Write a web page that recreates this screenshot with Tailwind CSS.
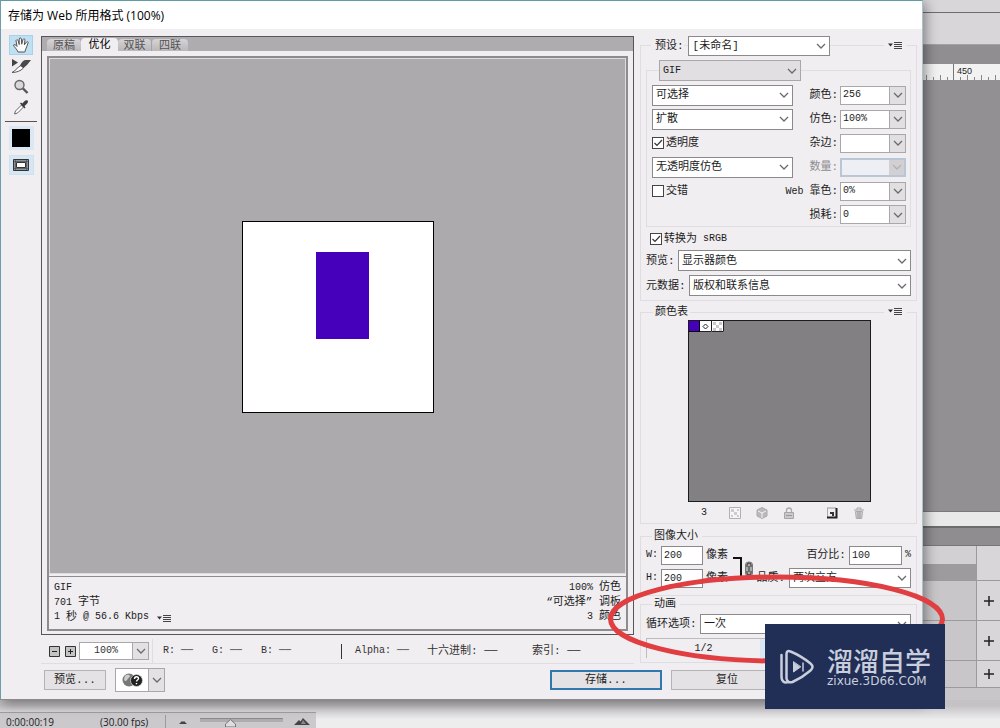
<!DOCTYPE html>
<html lang="zh-CN">
<head>
<meta charset="utf-8">
<meta name="viewport" content="width=device-width, initial-scale=1">
<title>存储为 Web 所用格式</title>
<script src="https://cdn.jsdelivr.net/npm/@tailwindcss/browser@4"></script>
</head>
<body class="relative flex min-h-screen flex-col overflow-x-hidden bg-[#e9e8e9] font-['Liberation_Mono','Noto_Sans_CJK_SC',monospace] text-[11px] leading-4 text-[#1c1c1c]">
<svg class="hidden" aria-hidden="true">
  <symbol id="chev" viewBox="0 0 10 6"><path d="M1 1l4 4 4-4" fill="none" stroke="#6b6b6b" stroke-width="1.3"/></symbol>
  <symbol id="menu" viewBox="0 0 15 8"><path d="M0 1.500h5L2.500 4.500z" fill="#333"/><path d="M6 .5h8M6 2.500h8M6 4.500h8M6 6.500h8" stroke="#444" stroke-width="1"/></symbol>
</svg>

<div class="flex grow">
  <!-- dialog -->
  <main class="relative z-10 flex min-w-0 grow flex-col border border-t-[#5f9ba5] border-r-[#a8c4c8] border-b-[#8c8a8c] border-l-[#6f9dac] bg-[#f0eef1] shadow-[2px_3px_12px_rgba(0,0,0,0.45)]">
    <h1 class="flex h-7 items-center bg-white pl-[7px] pt-px font-['Open_Sans','Noto_Sans_CJK_SC',sans-serif] text-[12px] text-black">存储为 Web 所用格式 (100%)</h1>

    <div class="flex grow">
      <!-- tools -->
      <nav class="flex w-10 shrink-0 flex-col items-center pt-[6px]" aria-label="工具">
        <button aria-label="抓手工具" class="flex h-5 w-6 items-center justify-center border border-[#a9d0ea] bg-[#bfdff3]">
          <svg class="h-[18px] w-[18px]" viewBox="0 0 18 18"><path d="M6 16C5 13 2 11 1.500 9c.8-1 2.200-.3 3.500 1.500L4 4.500c.8-1.300 2-.7 2.300.5l.9 3.500V3c.4-1.500 1.900-1.400 2.200 0l.3 5.200L11 3.500c.6-1.200 2-.8 1.900.6l-.5 4.700L14.500 6c.9-.9 2-.2 1.600 1l-2.300 6-1 3z" fill="#fafafa" stroke="#555" stroke-width="1"/></svg>
        </button>
        <button aria-label="切片选择工具" class="flex h-[21px] w-6 items-center justify-center">
          <svg class="h-[14px] w-5" viewBox="0 0 20 14"><path d="M1 0l6 3.500-6 4z" fill="#444"/><path d="M1 13.500C5 12 6 8 10 6.500l2.500 2.500c-3 3-7 4.500-11.500 4.500z" fill="#fff" stroke="#555"/><path d="M9 6.500C10.500 3 12.500 1 15 1h5c-1.500 1.500-2 3-4 5l-3.500 3z" fill="#4a4a4a"/></svg>
        </button>
        <button aria-label="缩放工具" class="flex h-[21px] w-6 items-center justify-center">
          <svg class="h-4 w-4" viewBox="0 0 16 16"><circle cx="6.500" cy="6" r="4.500" fill="#d8d8d8" stroke="#666" stroke-width="1.400"/><path d="M10 9.500l4.500 4.500" stroke="#555" stroke-width="2.400"/></svg>
        </button>
        <button aria-label="吸管工具" class="flex h-5 w-6 items-center justify-center">
          <svg class="h-4 w-4" viewBox="0 0 16 16"><path d="M1.500 15l1-3 6-6 2 2-6 6z" fill="#fff" stroke="#666"/><path d="M7 4.500l1-1 1.500 1C11 2 13 .5 14.500 1.500S14 5 11.500 7l1 1.500-1 1z" fill="#3c3c3c"/></svg>
        </button>
        <hr class="mt-1 w-8 border-t border-[#555]">
        <button aria-label="吸管颜色" class="mt-1 flex h-6 w-[25px] items-center justify-center bg-[#dbe7f3]"><span class="h-[18px] w-[18px] bg-black"></span></button>
        <button aria-label="切换切片可见性" class="mt-[5px] flex h-5 w-[25px] items-center justify-center border border-[#cfe0ef] bg-[#d5e6f5]">
          <svg class="h-3 w-4" viewBox="0 0 16 12"><path d="M.5.5h15v11H.5z" fill="#8b949b" stroke="#333"/><path d="M3.500 3.500h9v5h-9z" fill="#fff" stroke="#333"/><path d="M1 2.500h14M1 9.500h14M2.500 1v10M13.500 1v10" stroke="#444" stroke-width=".6"/></svg>
        </button>
      </nav>

      <!-- preview -->
      <section class="flex min-w-0 grow flex-col pt-[7px]">
        <div class="flex grow flex-col border border-[#57555a]">
          <div class="flex h-[14px] items-end bg-[#aeacaf] pl-[5px] text-[#555]" role="tablist">
            <button role="tab" class="h-3 w-[34px] rounded-t-sm bg-linear-to-b from-[#d6d4d6] to-[#b9b7ba] leading-[14px]">原稿</button>
            <button role="tab" aria-selected="true" class="h-[13px] w-[37px] rounded-t-sm bg-[#f0eef1] leading-[15px] text-black">优化</button>
            <button role="tab" class="h-3 w-[34px] rounded-t-sm border-r border-[#a5a3a6] bg-linear-to-b from-[#d6d4d6] to-[#b9b7ba] leading-[14px]">双联</button>
            <button role="tab" class="h-3 w-9 rounded-t-sm bg-linear-to-b from-[#d6d4d6] to-[#b9b7ba] leading-[14px]">四联</button>
          </div>
          <div class="mx-[5px] mt-[5px] mb-[3px] flex grow flex-col border-2 border-[#8e8c90]">
            <div class="flex grow items-center justify-center border border-[#dddbde] bg-[#acaaac] pt-[2px]">
              <div class="flex h-48 w-48 justify-center border border-black bg-white pt-[30px] pl-[10px]"><div class="h-[87px] w-[53px] bg-[#4600bb]"></div></div>
            </div>
            <div class="mt-[2px] flex h-[53px] items-center justify-between border-t border-[#8e8c90] px-[5px] pb-[2px] text-[10px] leading-[14px]">
              <div>
                <p>GIF</p>
                <p>701 <span class="text-[11px]">字节</span></p>
                <p class="flex items-center">1&nbsp;<span class="text-[11px]">秒</span>&nbsp;@ 56.6 Kbps<button aria-label="优化菜单" class="ml-2"><svg class="mt-1 h-2 w-[15px]"><use href="#menu"/></svg></button></p>
              </div>
              <div class="text-right">
                <p>100% <span class="text-[11px]">仿色</span></p>
                <p class="text-[11px]">“可选择” 调板</p>
                <p>3 <span class="text-[11px]">颜色</span></p>
              </div>
            </div>
          </div>
        </div>
        <div class="mt-1 flex h-[25px] items-center border-b border-[#dfdde0] pl-2 text-[#333]">
          <button aria-label="缩小"><svg class="h-[11px] w-[11px]" viewBox="0 0 11 11"><path d="M.5.5h10v10H.5z" fill="#c4c4c4" stroke="#333"/><path d="M3 5.500h5" stroke="#222"/></svg></button>
          <button aria-label="放大" class="ml-[5px]"><svg class="h-[11px] w-[11px]" viewBox="0 0 11 11"><path d="M.5.5h10v10H.5z" fill="#c4c4c4" stroke="#333"/><path d="M3 5.500h5M5.500 3v5" stroke="#222"/></svg></button>
          <div class="ml-[3px] flex h-[18px] w-[70px] border border-[#a9a7aa] bg-white"><input aria-label="缩放级别" value="100%" class="w-0 grow text-center text-[10px]"><button aria-label="选择缩放级别" class="flex w-4 items-center justify-center border-l border-[#a9a7aa] bg-[#e3e1e4]"><svg class="h-[6px] w-[10px]"><use href="#chev"/></svg></button></div>
          <div class="ml-[3px] flex h-full w-[189px] items-center border-l border-[#dfdde0] pl-[10px] text-[10px]"><span class="w-[49px]">R: ──</span><span class="w-[49px]">G: ──</span><span>B: ──</span></div>
          <div class="h-[15px] w-px bg-[#333]"></div>
          <div class="flex grow items-center pl-[13px]"><span class="w-[72px] text-[10px]">Alpha: ──</span><span class="w-[105px]">十六进制: ──</span><span>索引: ──</span></div>
        </div>
      </section>

      <!-- settings -->
      <section class="mr-[5px] ml-[6px] w-[277px] shrink-0 pt-4">
        <div class="border border-[#dfdde0] pb-1">
          <div class="-mt-[10px] flex h-5 items-center pl-[10px]">
            <label for="preset" class="bg-[#f0eef1] pl-1">预设:</label>
            <span class="relative ml-1 flex h-5 w-[142px] items-center"><select id="preset" class="h-full w-full appearance-none border border-[#8b898c] bg-white pl-1 leading-4"><option>[未命名]</option></select><svg class="pointer-events-none absolute right-1 h-[6px] w-[10px]"><use href="#chev"/></svg></span>
            <button aria-label="预设菜单" class="mr-[9px] ml-auto bg-[#f0eef1] px-1"><svg class="h-2 w-[15px]"><use href="#menu"/></svg></button>
          </div>
          <div class="mx-[5px] mt-[14px] border border-[#dfdde0] pr-1 pl-[5px]">
            <div class="relative -mt-[11px] ml-[7px] flex h-[21px] w-[142px] items-center"><select aria-label="文件格式" class="h-full w-full appearance-none border border-[#a9a7aa] bg-[#e1dfe2] pl-[3px] text-[10px]"><option>GIF</option></select><svg class="pointer-events-none absolute right-1 h-[6px] w-[10px]"><use href="#chev"/></svg></div>
            <div class="flex pt-[2px]">
              <div class="w-[141px] shrink-0">
                <div class="relative flex h-6 items-center"><select aria-label="减低颜色深度算法" class="h-[21px] w-full appearance-none border border-[#8b898c] bg-white pl-[3px]"><option>可选择</option></select><svg class="pointer-events-none absolute right-1 h-[6px] w-[10px]"><use href="#chev"/></svg></div>
                <div class="relative flex h-6 items-center"><select aria-label="仿色算法" class="h-[21px] w-full appearance-none border border-[#8b898c] bg-white pl-[3px]"><option>扩散</option></select><svg class="pointer-events-none absolute right-1 h-[6px] w-[10px]"><use href="#chev"/></svg></div>
                <label class="relative flex h-6 items-center"><input type="checkbox" checked class="peer mr-[2px] h-3 w-3 appearance-none border border-[#444] bg-white"><svg class="pointer-events-none absolute left-0 hidden h-3 w-3 peer-checked:block" viewBox="0 0 12 12"><path d="M2.500 6l2.500 2.500 5-5.500" fill="none" stroke="#333" stroke-width="1.200"/></svg>透明度</label>
                <div class="relative flex h-6 items-center"><select aria-label="透明度仿色算法" class="h-[21px] w-full appearance-none border border-[#8b898c] bg-white pl-[3px]"><option>无透明度仿色</option></select><svg class="pointer-events-none absolute right-1 h-[6px] w-[10px]"><use href="#chev"/></svg></div>
                <label class="flex h-6 items-center"><input type="checkbox" class="mr-[2px] h-3 w-3 appearance-none border border-[#444] bg-white">交错</label>
              </div>
              <div class="-ml-[10px] grow">
                <div class="flex h-6 items-center justify-end"><label for="colors" class="mr-px">颜色:</label><span class="ml-px flex h-[19px] w-[66px] border border-[#a9a7aa] bg-white"><input id="colors" value="256" class="w-0 grow pl-[2px] text-[10px]"><button aria-label="选择颜色数" class="flex w-4 items-center justify-center border-l border-[#a9a7aa] bg-[#e1dfe2]"><svg class="h-[6px] w-[10px]"><use href="#chev"/></svg></button></span></div>
                <div class="flex h-6 items-center justify-end"><label for="dither" class="mr-px">仿色:</label><span class="ml-px flex h-[19px] w-[66px] border border-[#a9a7aa] bg-white"><input id="dither" value="100%" class="w-0 grow pl-[2px] text-[10px]"><button aria-label="选择仿色" class="flex w-4 items-center justify-center border-l border-[#a9a7aa] bg-[#e1dfe2]"><svg class="h-[6px] w-[10px]"><use href="#chev"/></svg></button></span></div>
                <div class="flex h-6 items-center justify-end"><label for="matte" class="mr-px">杂边:</label><span class="ml-px flex h-[19px] w-[66px] border border-[#a9a7aa] bg-white"><input id="matte" class="w-0 grow pl-[2px] text-[10px]"><button aria-label="选择杂边" class="flex w-4 items-center justify-center border-l border-[#a9a7aa] bg-[#e1dfe2]"><svg class="h-[6px] w-[10px]"><use href="#chev"/></svg></button></span></div>
                <div class="flex h-6 items-center justify-end text-[#8f8d90]"><label for="amount" class="mr-px">数量:</label><span class="ml-px flex h-[19px] w-[66px] border-2 border-[#b9c6d6] bg-[#eeeff5]"><input id="amount" disabled class="w-0 grow"><button disabled aria-label="选择数量" class="flex w-[15px] items-center justify-center bg-[#d2d0d3]"><svg class="h-[6px] w-[10px] opacity-30"><use href="#chev"/></svg></button></span></div>
                <div class="flex h-6 items-center justify-end"><label for="websnap" class="mr-px whitespace-nowrap"><span class="text-[10px]">Web </span>靠色:</label><span class="ml-px flex h-[19px] w-[66px] border border-[#a9a7aa] bg-white"><input id="websnap" value="0%" class="w-0 grow pl-[2px] text-[10px]"><button aria-label="选择靠色" class="flex w-4 items-center justify-center border-l border-[#a9a7aa] bg-[#e1dfe2]"><svg class="h-[6px] w-[10px]"><use href="#chev"/></svg></button></span></div>
                <div class="flex h-[23px] items-center justify-end"><label for="lossy" class="mr-px">损耗:</label><span class="ml-px flex h-[19px] w-[66px] border border-[#a9a7aa] bg-white"><input id="lossy" value="0" class="w-0 grow pl-[2px] text-[10px]"><button aria-label="选择损耗" class="flex w-4 items-center justify-center border-l border-[#a9a7aa] bg-[#e1dfe2]"><svg class="h-[6px] w-[10px]"><use href="#chev"/></svg></button></span></div>
              </div>
            </div>
          </div>
          <label class="relative ml-[9px] flex h-[23px] items-center"><input type="checkbox" checked class="peer mr-[2px] h-3 w-3 appearance-none border border-[#444] bg-white"><svg class="pointer-events-none absolute left-0 hidden h-3 w-3 peer-checked:block" viewBox="0 0 12 12"><path d="M2.500 6l2.500 2.500 5-5.500" fill="none" stroke="#333" stroke-width="1.200"/></svg>转换为<span class="ml-[6px] text-[10px]">sRGB</span></label>
          <div class="mx-[5px] flex h-[21px] items-center"><label for="pv" class="w-8">预览:</label><span class="relative flex h-full grow items-center"><select id="pv" class="h-full w-full appearance-none border border-[#8b898c] bg-white pl-[3px]"><option>显示器颜色</option></select><svg class="pointer-events-none absolute right-1 h-[6px] w-[10px]"><use href="#chev"/></svg></span></div>
          <div class="mx-[5px] mt-1 flex h-[21px] items-center"><label for="meta" class="w-[43px]">元数据:</label><span class="relative flex h-full grow items-center"><select id="meta" class="h-full w-full appearance-none border border-[#8b898c] bg-white pl-[3px]"><option>版权和联系信息</option></select><svg class="pointer-events-none absolute right-1 h-[6px] w-[10px]"><use href="#chev"/></svg></span></div>
        </div>

        <div class="mt-[11px] border border-[#dfdde0]">
          <div class="-mt-[9px] flex h-4 items-center justify-between pr-[9px] pl-3"><h2 class="bg-[#f0eef1] px-[2px]">颜色表</h2><button aria-label="颜色表菜单" class="bg-[#f0eef1] px-1"><svg class="h-2 w-[15px]"><use href="#menu"/></svg></button></div>
          <div class="ml-[47px] flex h-[182px] w-[183px] items-start border border-[#1c1c1c] bg-[#828082]">
            <span class="h-[11px] w-[11px] border-r border-b border-black bg-[#4600bb]"></span>
            <svg class="h-[11px] w-[12px]" viewBox="0 0 12 11"><path d="M0 0h12v11H0z" fill="#fff"/><path d="M5.500 3L8 5.500 5.500 8 3 5.500z" fill="#fff" stroke="#222"/><path d="M0 10.500h11.500V0" fill="none" stroke="#222"/></svg>
            <svg class="h-[11px] w-[12px]" viewBox="0 0 12 11"><path d="M0 0h12v11H0z" fill="#fff"/><path d="M1 1h3v3H1zM7 1h3v3H7zM4 4h3v3H4zM1 7h3v3H1zM7 7h3v3H7z" fill="#c9c9c9"/><path d="M0 10.500h11.500V0" fill="none" stroke="#222"/></svg>
          </div>
          <div class="flex h-[21px] items-center pl-[60px]">
            <span class="w-7 text-[10px]">3</span>
            <button aria-label="映射为透明" class="w-[27px]"><svg class="h-3 w-3" viewBox="0 0 12 12"><path d="M.5.500h11v11H.5z" fill="#f5f5f5" stroke="#b0b0b0"/><path d="M2 2h3v3H2zM8 2h2v2H8zM5 5h3v3H5zM2 8h2v2H2zM8 8h2v2H8z" fill="#ccc"/></svg></button>
            <button aria-label="转换为 Web 调板" class="w-[27px]"><svg class="h-3 w-3" viewBox="0 0 12 12"><path d="M6 .5l5 2.500v6l-5 2.500L1 9V3z" fill="#b9b9b9" stroke="#aaa"/><path d="M2 4l4 2 4-2M6 6v5" fill="none" stroke="#f4f4f4"/></svg></button>
            <button aria-label="锁定" class="w-[43px]"><svg class="h-3 w-3" viewBox="0 0 12 12"><path d="M3.500 6V3.500a2.500 2.500 0 015 0V6" fill="none" stroke="#aaa" stroke-width="1.300"/><path d="M1.500 5.500h9v6h-9z" fill="#c9c9c9" stroke="#a5a5a5"/><path d="M3 8.500h6" stroke="#999"/></svg></button>
            <button aria-label="新建颜色" class="w-[27px]"><svg class="h-3 w-3" viewBox="0 0 12 12"><path d="M1 1h9" stroke="#999"/><path d="M1.500 1v9" stroke="#aaa"/><path d="M1 10.500h9.500V1" fill="none" stroke="#222" stroke-width="2"/><path d="M4 5h4v4H6V7H4z" fill="#333"/></svg></button>
            <button aria-label="删除颜色"><svg class="h-3 w-3" viewBox="0 0 12 12"><path d="M1 3h10M4 2.500V1h4v1.500" fill="none" stroke="#a5a5a5"/><path d="M2.500 4.500h7l-.8 7H3.300z" fill="#d0d0d0" stroke="#aaa"/><path d="M5 5v6M7 5v6" stroke="#999"/></svg></button>
          </div>
        </div>

        <div class="mt-3 border border-[#dfdde0] px-[5px] pb-[7px]">
          <h2 class="-mt-[9px] ml-[6px] h-4 w-[50px] bg-[#f0eef1] px-[2px]">图像大小</h2>
          <div class="flex">
            <div>
              <div class="mt-px flex h-5 items-center"><label for="w" class="w-[15px] text-[10px]">W:</label><input id="w" value="200" class="h-[19px] w-[42px] border border-[#8b898c] bg-white pl-[2px] text-[10px]"><span class="ml-[3px]">像素</span></div>
              <div class="mt-[3px] flex h-5 items-center"><label for="h" class="w-[15px] text-[10px]">H:</label><input id="h" value="200" class="h-[19px] w-[42px] border border-[#8b898c] bg-white pl-[2px] text-[10px]"><span class="ml-[3px]">像素</span></div>
            </div>
            <svg class="mt-3 ml-[5px] h-[26px] w-[22px]" viewBox="0 0 22 26"><path d="M0 2h8V22" fill="none" stroke="#111" stroke-width="2"/><rect x="12.500" y="6" width="7" height="14" rx="3" fill="#aaa" stroke="#777"/><path d="M14 11v-2a2 2 0 014 0v2M14 15v2a2 2 0 004 0v-2M16 10v6" fill="none" stroke="#333"/></svg>
            <div class="grow">
              <div class="mt-px flex h-5 items-center justify-end"><label for="pct">百分比:</label><input id="pct" value="100" class="ml-[3px] h-[19px] w-[53px] border border-[#8b898c] bg-white pl-[2px] text-[10px]"><span class="ml-[3px] text-[10px]">%</span></div>
              <div class="mt-[3px] flex h-5 items-center justify-end"><label for="q">品质:</label><span class="relative ml-1 flex h-5 w-[122px] items-center"><select id="q" class="h-full w-full appearance-none border border-[#8b898c] bg-white pl-[3px]"><option>两次立方</option></select><svg class="pointer-events-none absolute right-1 h-[6px] w-[10px]"><use href="#chev"/></svg></span></div>
            </div>
          </div>
        </div>

        <div class="mt-2 border border-[#dfdde0] px-[5px] pb-1">
          <h2 class="-mt-[9px] ml-[6px] h-4 w-[28px] bg-[#f0eef1] px-[2px]">动画</h2>
          <div class="mt-[2px] flex h-5 items-center"><label for="loop" class="w-[54px] whitespace-nowrap">循环选项:</label><span class="relative flex h-full grow items-center"><select id="loop" class="h-full w-full appearance-none border border-[#8b898c] bg-white pl-[3px]"><option>一次</option></select><svg class="pointer-events-none absolute right-1 h-[6px] w-[10px]"><use href="#chev"/></svg></span></div>
          <div class="mt-1 flex h-5 border-t border-l border-[#bdbbbe] text-[10px]"><span class="flex w-[113px] items-center justify-center">1/2</span><span class="grow bg-[#d9e7f5]"></span></div>
        </div>
      </section>
    </div>

    <div class="flex h-[35px] items-start pt-1 pl-[43px]">
      <button class="mt-[2px] h-5 w-[62px] border border-[#b5b3b6] bg-[#e4e2e5]">预览...</button>
      <div class="ml-[9px] flex h-6 w-[50px] border border-[#a9a7aa] bg-white">
        <button aria-label="在浏览器中预览" class="flex grow items-center justify-center"><svg class="h-[14px] w-[21px]" viewBox="0 0 21 14"><circle cx="7" cy="7" r="6.500" fill="#777"/><path d="M3 3c2-2 5-1 5 0S6 5 5 7s-3 1-3-1z" fill="#ccc"/><circle cx="14.500" cy="7.500" r="6" fill="#222" stroke="#ddd" stroke-width=".7"/><path d="M12.500 6c0-3 4-3 4-.5 0 1.500-2 1.500-2 3M14.500 10v1.300" fill="none" stroke="#fff" stroke-width="1.400"/></svg></button>
        <button aria-label="选择浏览器" class="flex w-4 items-center justify-center border-l border-[#a9a7aa] bg-[#e3e1e4]"><svg class="h-[6px] w-[10px]"><use href="#chev"/></svg></button>
      </div>
      <button class="mt-[2px] ml-auto h-5 w-[112px] border-2 border-[#3078ae] bg-[#e4e2e5]">存储...</button>
      <button class="mt-[2px] mr-[139px] ml-[9px] h-5 w-[112px] border border-[#b5b3b6] bg-[#e4e2e5]">复位</button>
    </div>
  </main>

  <!-- editor window behind the dialog -->
  <aside class="flex w-[77px] shrink-0 flex-col bg-[#c8c6c9]">
    <div class="h-[13px] border-b border-[#6d6b6e] bg-[#d8d6d9]"></div>
    <div class="h-8 border-b border-[#a2a0a3] bg-[#d8d6d9]"></div>
    <div class="h-[19px] bg-[#908e91]"></div>
    <svg class="h-4 w-full bg-[#f3f2f3]" viewBox="0 0 77 16"><path d="M30.500 0v16" stroke="#777"/><path d="M3.500 11v5M10.500 13v3M17.500 11v5M24.500 13v3M37.500 13v3M44.500 11v5M51.500 13v3M58.500 11v5M65.500 13v3M72.500 11v5" stroke="#888"/><text x="34" y="10" font-family="Liberation Sans" font-size="9" fill="#222">450</text></svg>
    <div class="grow bg-[#929093]"></div>
    <div class="h-[15px] border-t border-[#7b797c] bg-[#eae9ea]"></div>
    <div class="h-5 border-t-2 border-b border-t-[#6d6b6e] border-b-[#777] bg-[#8f8d90]"></div>
    <div class="grid grid-cols-[54px_1fr] grid-rows-[35px_40px_40px_26px] border-b border-[#9c9a9d]">
      <div class="flex flex-col border-r border-b border-[#9c9a9d] bg-[#d2d0d3]"><div class="mt-[18px] grow bg-[#9d9b9e]"></div></div>
      <div class="border-b border-[#9c9a9d] bg-[#d8d6d9]"></div>
      <div class="border-r border-b border-[#9c9a9d]"></div>
      <button aria-label="添加图层一媒体" class="flex items-center justify-center border-b border-[#9c9a9d] bg-[#d8d6d9]"><svg class="h-[10px] w-[10px]" viewBox="0 0 10 10"><path d="M0 5h10M5 0v10" stroke="#222" stroke-width="1.500"/></svg></button>
      <div class="border-r border-b border-[#9c9a9d]"></div>
      <button aria-label="添加图层二媒体" class="flex items-center justify-center border-b border-[#9c9a9d] bg-[#d8d6d9]"><svg class="h-[10px] w-[10px]" viewBox="0 0 10 10"><path d="M0 5h10M5 0v10" stroke="#222" stroke-width="1.500"/></svg></button>
      <div class="border-r border-[#9c9a9d]"></div>
      <button aria-label="添加音频" class="flex items-center justify-center bg-[#d8d6d9]"><svg class="h-[10px] w-[10px]" viewBox="0 0 10 10"><path d="M0 5h10M5 0v10" stroke="#222" stroke-width="1.500"/></svg></button>
    </div>
    <div class="h-3"></div>
  </aside>
</div>

<footer class="flex h-7 flex-col bg-linear-to-b from-[#c4c2c5] from-20% to-[#eeedee] to-70%">
  <div class="mt-3 flex h-4 w-[316px] items-center border-t border-[#a09ea1] bg-[#cbc9cc] pt-[2px] font-['Open_Sans',sans-serif] text-[10px]">
    <span class="w-[100px] pl-[6px]">0:00:00:19</span><span class="w-[65px]">(30.00 fps)</span>
    <span class="flex h-full w-[35px] items-center justify-center border-l border-[#9c9a9d]"><svg class="h-1 w-2" viewBox="0 0 8 4"><path d="M0 4l3-3 1 1 1-1 3 3z" fill="#444"/></svg></span>
    <span class="relative flex h-full w-[83px] items-start"><span class="mt-[3px] h-1 w-full border-t border-[#8b898c] bg-[#aeacaf]"></span><input type="range" aria-label="时间轴缩放" class="absolute inset-0 w-full opacity-0"><svg class="absolute top-1 left-[25px] h-2 w-[11px]" viewBox="0 0 11 8"><path d="M.5 8V5l5-4.500 5 4.500v3z" fill="#ddd" stroke="#777"/></svg></span>
    <svg class="ml-[11px] h-[7px] w-4" viewBox="0 0 16 7"><path d="M0 7l5-5 1.500 1.500L9 0l7 7z" fill="#444"/><path d="M7 6l2-4 3 4z" fill="#888"/></svg>
  </div>
</footer>

<!-- annotation ring and watermark -->
<svg class="pointer-events-none absolute right-[54px] bottom-[64px] z-20 h-[90px] w-[339px]" viewBox="0 0 339 90"><ellipse cx="169.500" cy="45" rx="166" ry="42" fill="none" stroke="#e03e40" stroke-width="5"/></svg>
<div class="absolute right-[55px] bottom-[19px] z-30 flex h-[85px] w-[180px] items-center bg-[#212e55] pl-[14px] text-[#c9cedd]">
  <svg class="h-9 w-[36px]" viewBox="0 0 36 36" fill="none" stroke="#c9cedd" stroke-width="2.500" stroke-linecap="round" stroke-linejoin="round"><path d="M2.500 6v21q0 8 7 6"/><path d="M7.500 26V5q0-4 4-2.500 10 4 20 12 4 3.500 0 7-8 7-18 11.500-5 1.500-6-3.500z"/><path d="M14.500 13v10l7-5z" fill="#c9cedd" stroke-width="1"/><path d="M24 14v8" stroke-width="1.500"/></svg>
  <div class="ml-3">
    <p class="font-['Noto_Sans_CJK_SC',sans-serif] text-[26px] leading-[26px] font-medium">溜溜自学</p>
    <p class="mt-[2px] font-['DejaVu_Sans',sans-serif] text-[12px] leading-3">zixue.3D66.COM</p>
  </div>
</div>
</body>
</html>
